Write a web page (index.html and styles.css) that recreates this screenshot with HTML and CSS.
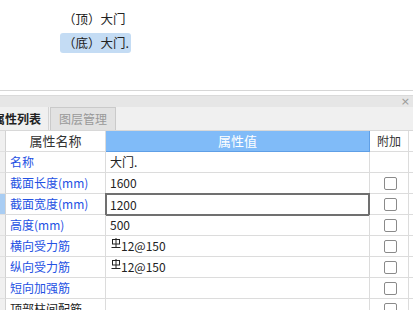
FILE: index.html
```html
<!DOCTYPE html>
<html>
<head>
<meta charset="utf-8">
<link rel="stylesheet" href="styles.css">
</head>
<body>
<div class="tree">
  <div class="node clipped">大门</div>
  <div class="node child">（顶）大门</div>
  <div class="node child sel">（底）大门.</div>
</div>
<div class="divider"></div>
<div class="panel">
  <div class="titlebar"><span class="close">×</span></div>
  <div class="tabs">
    <div class="tab active">属性列表</div>
    <div class="tab">图层管理</div>
  </div>
  <div class="grid">
    <div class="rh"></div><div class="c head">属性名称</div><div class="c head val">属性值</div><div class="c head add">附加</div><div class="tail"></div>

    <div class="rh"></div><div class="c name">名称</div><div class="c v">大门.</div><div class="c add"></div><div class="tail"></div>
    <div class="rh"></div><div class="c name">截面长度(mm)</div><div class="c v">1600</div><div class="c add"><span class="cb"></span></div><div class="tail"></div>
    <div class="rh cur"></div><div class="c name">截面宽度(mm)</div><div class="c v edit">1200</div><div class="c add"><span class="cb"></span></div><div class="tail"></div>
    <div class="rh"></div><div class="c name">高度(mm)</div><div class="c v">500</div><div class="c add"><span class="cb"></span></div><div class="tail"></div>
    <div class="rh"></div><div class="c name">横向受力筋</div><div class="c v"><svg class="bar" width="10" height="11" viewBox="0 0 10 11"><rect x="1.5" y="1.5" width="7" height="4.5" fill="none" stroke="#222" stroke-width="1"/><path d="M5 0v10M0.5 9.5h9" stroke="#222" stroke-width="1" fill="none"/></svg>12@150</div><div class="c add"><span class="cb"></span></div><div class="tail"></div>
    <div class="rh"></div><div class="c name">纵向受力筋</div><div class="c v"><svg class="bar" width="10" height="11" viewBox="0 0 10 11"><rect x="1.5" y="1.5" width="7" height="4.5" fill="none" stroke="#222" stroke-width="1"/><path d="M5 0v10M0.5 9.5h9" stroke="#222" stroke-width="1" fill="none"/></svg>12@150</div><div class="c add"><span class="cb"></span></div><div class="tail"></div>
    <div class="rh"></div><div class="c name">短向加强筋</div><div class="c v"></div><div class="c add"><span class="cb"></span></div><div class="tail"></div>
    <div class="rh"></div><div class="c name dark">顶部柱间配筋</div><div class="c v"></div><div class="c add"><span class="cb"></span></div><div class="tail"></div>
  </div>
</div>
</body>
</html>
```
FILE: styles.css
```css
html, body {
  margin: 0;
  padding: 0;
  background: #fff;
  width: 413px;
  height: 310px;
  overflow: hidden;
  font-family: "Noto Sans CJK SC", "Noto Sans", sans-serif;
  font-size: 12px;
  color: #222;
}
.tree {
  height: 90px;
  overflow: hidden;
}
.node {
  height: 20px;
  line-height: 20px;
  white-space: nowrap;
}
.clipped {
  margin-top: -16px;
  padding-left: 36px;
  margin-bottom: 5px;
}
.child {
  margin-left: 60px;
  padding: 0 2px 0 3px;
  width: fit-content;
  margin-bottom: 4px;
  font-size: 12.5px;
}
.sel {
  background: #c4dcf4;
  border-radius: 3px;
  padding-right: 2px;
}
.divider {
  height: 1px;
  background: #d6d6d6;
}
.panel {
  padding-top: 4px;
}
.titlebar {
  height: 11px;
  background: #e6e6e6;
  border-top: 1px solid #dadada;
  display: flex;
  justify-content: flex-end;
  align-items: center;
}
.close {
  color: #999;
  font-size: 11px;
  line-height: 11px;
  margin-right: 3px;
  font-family: "DejaVu Sans", sans-serif;
}
.tabs {
  height: 23px;
  background: #f0f0f0;
  display: flex;
  align-items: flex-end;
}
.tab {
  height: 22px;
  line-height: 22px;
  font-size: 12px;
  padding: 0 8px;
  color: #999;
  background: #e2e2e2;
  border: 1px solid #cacaca;
  border-bottom: none;
  margin-left: 1px;
}
.tab.active {
  margin-left: -8px;
  color: #222;
  font-weight: bold;
  background: #f0f0f0;
  border: none;
  border-right: 1px solid #d4d4d4;
  height: 23px;
  line-height: 23px;
  padding: 0 7px 0 1px;
}
.grid {
  display: grid;
  grid-template-columns: 6px 100px 264px 39px 1fr;
  grid-auto-rows: 21px;
  border-top: 1px solid #d8d8d8;
}
.rh {
  background: #f0f0f0;
  border-right: 1px solid #d2d2d2;
  border-bottom: 1px solid #e0e0e0;
}
.rh.cur {
  background: #a9cdf3;
}
.c {
  border-right: 1px solid #dcdcdc;
  border-bottom: 1px solid #dcdcdc;
  line-height: 20px;
  white-space: nowrap;
  overflow: hidden;
}
.tail {
  border-bottom: 1px solid #dcdcdc;
}
.head {
  text-align: center;
  font-size: 13px;
  color: #333;
}
.head.val {
  background: #80bbf8;
  color: #fff;
  border-right: 1px solid #5f9fe6;
  border-bottom: 1px solid #5f9fe6;
}
.head.add {
  font-size: 12px;
}
.name {
  color: #2451e3;
  padding-left: 4px;
}
.name.dark {
  color: #222;
}
.v {
  padding-left: 4px;
  color: #222;
  display: flex;
  align-items: center;
}
.edit {
  border: 2px solid #707070;
  margin: -1px 0 -1px -1px;
  padding-left: 3px;
}
.bar {
  margin: -5px 0 0 1px;
}
.add {
  display: flex;
  align-items: center;
  justify-content: center;
}
.cb {
  width: 11px;
  height: 11px;
  border: 1px solid #8a8a8a;
  border-radius: 2px;
  background: #fff;
  margin-left: 2px;
}
```
